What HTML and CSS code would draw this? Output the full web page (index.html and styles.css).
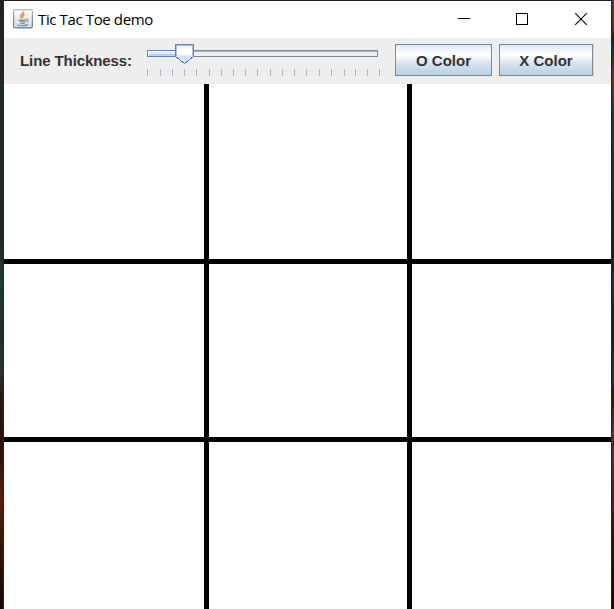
FILE: index.html
```html
<!DOCTYPE html>
<html lang="en">
<head>
<meta charset="utf-8">
<title>Tic Tac Toe demo</title>
<link rel="stylesheet" href="styles.css">
</head>
<body>
<div class="desktop">
  <div class="edge edge-left"></div>
  <main class="window">
    <header class="titlebar">
      <svg class="app-icon" width="20" height="20" viewBox="0 0 20 20">
        <defs>
          <linearGradient id="tile" x1="0" y1="0" x2="0" y2="1"><stop offset="0" stop-color="#fdfdfd"/><stop offset="1" stop-color="#d6dbe0"/></linearGradient>
          <linearGradient id="rim" x1="0" y1="0" x2="0" y2="1"><stop offset="0" stop-color="#a9b5bf"/><stop offset="1" stop-color="#587b96"/></linearGradient>
        </defs>
        <rect x=".6" y=".6" width="18.8" height="18.2" rx="1.5" fill="url(#tile)" stroke="url(#rim)" stroke-width="1.2"/>
        <path d="M10.300 2.500C11 5 7 5.500 7.700 7.500C8 8.500 8.800 8.800 9 9.600M11.500 5.200C9.300 6.500 9.200 7.300 10.200 8.800" fill="none" stroke="#eb9142" stroke-width="1.600"/>
        <path d="M5.500 10.500H12.500V12.200Q9 14.200 6 12.200Z" fill="#7897b1"/>
        <path d="M7 14.200Q9 15 12 14.200M4 15.800Q9 17.800 15 15.600M12.500 10.300C16 9.800 15.500 12.500 12.500 13" fill="none" stroke="#7193b0" stroke-width="1.200"/>
      </svg>
      <h1 class="title">Tic Tac Toe demo</h1>
      <svg class="controls" width="131" height="13" viewBox="0 0 131 13" fill="none" stroke="#000" shape-rendering="crispEdges">
        <path d="M0 5.500H12M58.500 .5H69.500V11.500H58.500Z"/>
        <path d="M117.200 .2L128.800 11.800M128.800 .2L117.200 11.800" shape-rendering="auto" stroke-width="1.100"/>
      </svg>
    </header>
    <section class="toolbar">
      <span class="label">Line Thickness:</span>
      <svg class="slider" width="234" height="34" viewBox="0 0 234 34" shape-rendering="crispEdges">
        <defs>
          <linearGradient id="thumb" x1="0" y1="0" x2="0" y2="1"><stop offset="0" stop-color="#dce8f4"/><stop offset=".24" stop-color="#fff"/><stop offset=".48" stop-color="#fff"/><stop offset=".62" stop-color="#d9e7f4"/><stop offset="1" stop-color="#cbdff2"/></linearGradient>
        </defs>
        <rect x=".5" y="6.500" width="230" height="6" fill="#eee" stroke="#7a8a99"/>
        <path d="M1 7.500H230" stroke="#a3b8cc"/>
        <rect x=".5" y="6.500" width="35" height="6" fill="#fff" stroke="#6382bf"/>
        <path d="M2 8.500H30" stroke="#edf2f8"/><path d="M2 9.500H30" stroke="#dce6f0"/><path d="M2 10.500H30M2 11.500H30" stroke="#bfd2e4"/>
        <path d="M28.500 .5H46.500V12.500L37.500 19.500L28.500 12.500Z" fill="url(#thumb)" stroke="#6382bf"/>
        <path d="M29.500 12V1.500H45.500V12" fill="none" stroke="#a5bfdf"/>
        <path d="M.5 25V32M13.500 25V32M25.500 25V32M37.500 25V32M49.500 25V32M62.500 25V32M74.500 25V32M86.500 25V32M98.500 25V32M110.500 25V32M123.500 25V32M135.500 25V32M147.500 25V32M159.500 25V32M172.500 25V32M184.500 25V32M197.500 25V32M208.500 25V32M220.500 25V32M232.500 25V32" stroke="#a3b8cc"/>
      </svg>
      <button class="button button-o">O Color</button>
      <button class="button button-x">X Color</button>
    </section>
    <section class="board">
      <div></div><div></div><div></div>
      <div></div><div></div><div></div>
      <div></div><div></div><div></div>
    </section>
  </main>
  <div class="edge edge-right"></div>
</div>
</body>
</html>
```
FILE: styles.css
```css
* { box-sizing: border-box; }
body { margin: 0; overflow: hidden; background: #211c19; }
.desktop {
  display: grid;
  grid-template-columns: 4px 607px 3px;
  width: 614px;
  height: 609px;
  padding-top: 1px;
}
.edge-left {
  background: linear-gradient(#20231f, #202b27 15%, #1d2723 39%, #26383a 46%, #202c2b 54%, #263431 61%, #2b1711 65%, #281009 72%, #54200f 82%, #301207 91%, #140805);
  border-right: 1px solid #202622;
}
.edge-right {
  background: linear-gradient(#5a3517 4%, #172522 6%, #29332c 9%, #613a20 13%, #26352f 18%, #18231f 42%, #282d31 46%, #1c2023 54%, #26302f 62%, #351610 65%, #5b3025 71%, #562115 80%, #351309 88%, #160707);
  border-left: 1px solid #252422;
}
.window {
  display: grid;
  grid-template-rows: 37px 46px 525px;
  background: #fff;
}
.titlebar {
  display: flex;
  align-items: center;
  padding-left: 9px;
}
.app-icon { margin-bottom: 1px; }
.title {
  margin: 0 0 2px 5px;
  font: 400 15px/20px "Open Sans", "Noto Sans", sans-serif;
  letter-spacing: -0.38px;
  white-space: nowrap;
}
.controls { margin: 0 22px 0 auto; }
.toolbar {
  display: flex;
  align-items: flex-start;
  padding: 6px 0 0 16px;
  background: #eee;
  color: #333;
  font: 700 15px "Liberation Sans", Arial, sans-serif;
}
.label {
  width: 127px;
  line-height: 33px;
  white-space: nowrap;
  letter-spacing: -0.1px;
}
.slider { flex: none; }
.button {
  height: 32px;
  padding: 1px 0 0;
  border: 1px solid #7a8a99;
  background: linear-gradient(#dde8f3, #fff 30%, #fff 34%, #dce7f2 56%, #b8cfe5);
  color: #333;
  font: inherit;
  letter-spacing: 0;
}
.button-o { width: 97px; margin-left: 14px; }
.button-x { width: 94px; margin-left: 7px; box-shadow: 1px 0 #cbd9e6; }
.board {
  display: grid;
  grid-template-columns: 200px 198px 199px;
  grid-template-rows: 175px 173px 167px;
  gap: 5px;
  background: #000;
}
.board > div { background: #fff; }
```
